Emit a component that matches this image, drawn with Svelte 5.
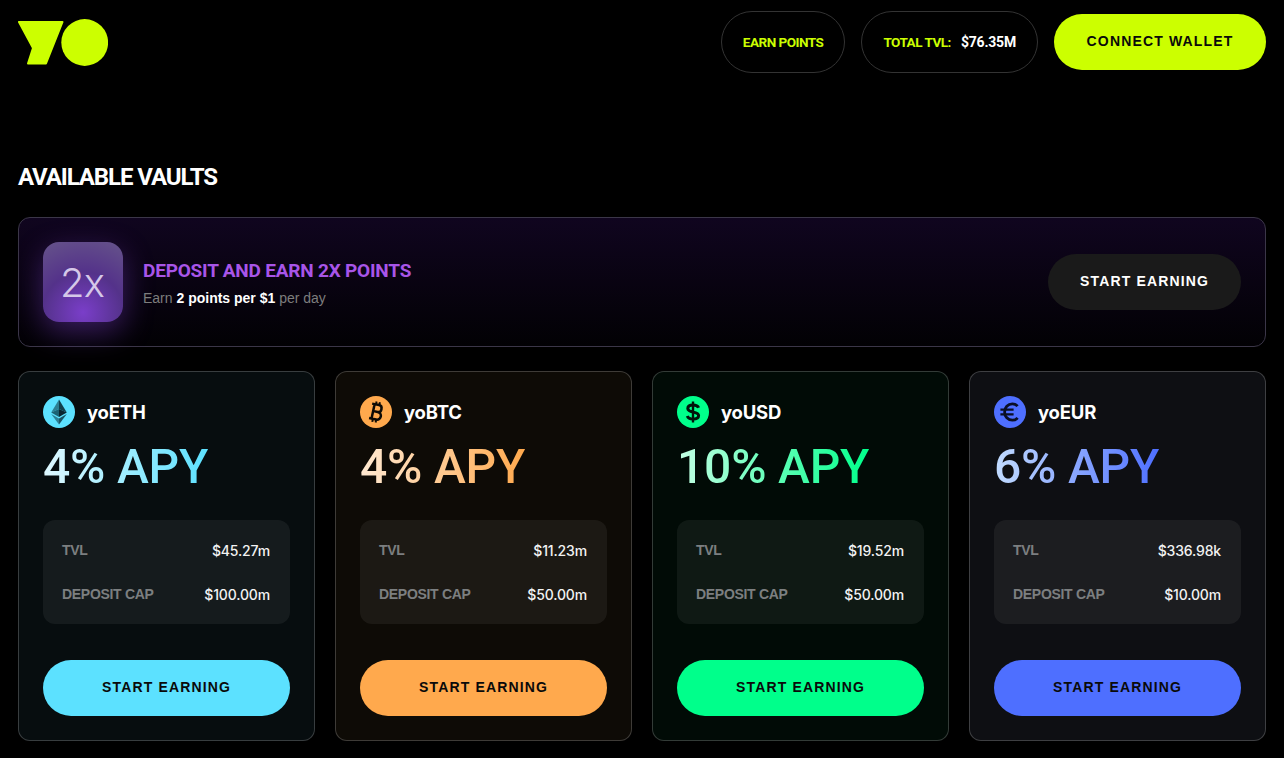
<script>
  const vaults = [
    { name: 'yoETH', apy: '4% APY', tvl: '$45.27m', cap: '$100.00m', accent: '#5ce1ff', light: '#dff8ff', bg: '#070d0f', icon: 'eth' },
    { name: 'yoBTC', apy: '4% APY', tvl: '$11.23m', cap: '$50.00m', accent: '#ffa94d', light: '#ffe9d2', bg: '#0e0b06', icon: 'btc' },
    { name: 'yoUSD', apy: '10% APY', tvl: '$19.52m', cap: '$50.00m', accent: '#00ff8b', light: '#c4ffe4', bg: '#010b06', icon: 'usd' },
    { name: 'yoEUR', apy: '6% APY', tvl: '$336.98k', cap: '$10.00m', accent: '#4e6fff', light: '#c2dcff', bg: '#0e0f13', icon: 'eur' }
  ];
</script>

<div class="page">
  <header class="top">
    <svg class="logo" width="90" height="47" viewBox="0 0 90 47" aria-label="YO">
      <path d="M1 3 H44.5 L28 44.5 H10 L15 29 Z" fill="#ccff00" stroke="#ccff00" stroke-width="2" stroke-linejoin="round" />
      <circle cx="66.7" cy="23.5" r="23.4" fill="#ccff00" />
    </svg>
    <div class="top-actions">
      <div class="pill"><span class="lime">EARN POINTS</span></div>
      <div class="pill"><span class="lime">TOTAL TVL:</span><span class="white">$76.35M</span></div>
      <button class="connect">CONNECT WALLET</button>
    </div>
  </header>

  <h1>AVAILABLE VAULTS</h1>

  <section class="banner">
    <div class="tile">2x</div>
    <div class="banner-text">
      <div class="banner-title">DEPOSIT AND EARN 2X POINTS</div>
      <div class="banner-sub">Earn <b>2 points per $1</b> per day</div>
    </div>
    <button class="banner-btn">START EARNING</button>
  </section>

  <section class="cards">
    {#each vaults as v}
      <article class="card" style="background: {v.bg}">
        <div class="card-head">
          <svg class="coin" width="32" height="32" viewBox="0 0 32 32">
            <circle cx="16" cy="16" r="16" fill={v.accent} />
            {#if v.icon === 'eth'}
              <path d="M16 3.5 L8.2 16.4 L16 12.9 Z" fill="#2d7f93" />
              <path d="M16 3.5 L23.8 16.4 L16 12.9 Z" fill="#123f4c" />
              <path d="M8.2 16.4 L16 12.9 V21 Z" fill="#1c6274" />
              <path d="M23.8 16.4 L16 12.9 V21 Z" fill="#0a2630" />
              <path d="M8.2 18 L16 22.6 V28.5 Z" fill="#2d8095" />
              <path d="M23.8 18 L16 22.6 V28.5 Z" fill="#1a5566" />
            {:else if v.icon === 'btc'}
              <g transform="rotate(12 16 16)" fill="none" stroke="#0e0b06" stroke-width="2.5">
                <path d="M10.5 8.6 H17.6 C21.8 8.6 21.8 15.6 17.6 15.6 H12.5 M17.6 15.6 C23 15.6 23 23.4 17.6 23.4 H10.5 M13 8.6 V23.4" />
                <path d="M14.4 5.6 V8.6 M17.8 5.6 V8.6 M14.4 23.4 V26.4 M17.8 23.4 V26.4" stroke-width="2" />
              </g>
            {:else if v.icon === 'usd'}
              <g fill="none" stroke="#01140b" stroke-width="3">
                <path d="M21.6 11.8 C20.8 9.8 18.8 9 16 9 C12.8 9 10.8 10.4 10.8 12.6 C10.8 17.6 21.6 14.6 21.6 19.6 C21.6 21.8 19.4 23.1 16 23.1 C13 23.1 11 22.1 10.3 20" />
                <path d="M16 5.5 V26.5" stroke-width="2.4" />
              </g>
            {:else}
              <g fill="none" stroke="#0a0f24" stroke-width="2.8">
                <path d="M23.6 10.2 C22.2 8.6 20.3 7.8 18.4 7.8 C13.8 7.8 10.6 11.4 10.6 16 C10.6 20.6 13.8 24.2 18.4 24.2 C20.3 24.2 22.2 23.4 23.6 21.8" />
                <path d="M6.4 13.6 H19.6 M6.4 18.4 H19.6" stroke-width="2.4" />
              </g>
            {/if}
          </svg>
          <span class="vault-name">{v.name}</span>
        </div>
        <div class="apy" style="background-image: linear-gradient(90deg, {v.light}, {v.accent})"><span>{v.apy}</span></div>
        <div class="stats">
          <div class="stat"><span class="stat-label">TVL</span><span class="stat-value">{v.tvl}</span></div>
          <div class="stat"><span class="stat-label">DEPOSIT CAP</span><span class="stat-value">{v.cap}</span></div>
        </div>
        <button class="card-btn" style="background: {v.accent}">START EARNING</button>
      </article>
    {/each}
  </section>
</div>

<style>
  :global(body) {
    margin: 0;
    background: #000;
  }

  .page {
    box-sizing: border-box;
    height: 758px;
    padding: 0 18px;
    background: #000;
    color: #fff;
    font-family: "Liberation Sans", Arial, sans-serif;
    overflow: hidden;
  }

  .top {
    display: flex;
    justify-content: space-between;
    align-items: center;
    height: 84px;
  }

  .logo {
    display: block;
    margin-top: 1px;
  }

  .top-actions {
    display: flex;
    align-items: center;
    gap: 16px;
  }

  .pill {
    box-sizing: border-box;
    display: flex;
    align-items: center;
    justify-content: center;
    gap: 10px;
    height: 62px;
    padding: 0 21px;
    border: 1px solid #333;
    border-radius: 31px;
    font-family: Roboto, sans-serif;
    font-size: 13.5px;
    font-weight: 700;
    letter-spacing: -0.5px;
  }

  .lime {
    color: #ccff00;
  }

  .white {
    color: #fff;
    font-size: 14px;
    letter-spacing: -0.2px;
  }

  button {
    border: 0;
    padding: 0 0 2px;
    font-family: "Liberation Sans", Arial, sans-serif;
    font-weight: 700;
    font-size: 14px;
    letter-spacing: 1.15px;
    cursor: pointer;
  }

  .connect {
    width: 212px;
    height: 56px;
    border-radius: 28px;
    background: #ccff00;
    color: #0a0a0a;
  }

  h1 {
    margin: 78px 0 0;
    height: 55px;
    font-family: Roboto, sans-serif;
    font-size: 24px;
    line-height: 30px;
    font-weight: 700;
    letter-spacing: -1.1px;
  }

  .banner {
    box-sizing: border-box;
    display: flex;
    align-items: center;
    height: 130px;
    padding: 0 24px;
    border: 1px solid #3b3648;
    border-radius: 12px;
    background: linear-gradient(180deg, #10051f 0%, #020104 100%);
  }

  .tile {
    display: flex;
    align-items: center;
    justify-content: center;
    width: 80px;
    height: 80px;
    border-radius: 16px;
    background: radial-gradient(circle at 50% 88%, #7a3ec9 0%, #54328a 50%, #66548a 100%);
    box-shadow: 0 10px 30px rgba(122, 62, 201, 0.45);
    color: #d5c8e8;
    font-family: Inter, sans-serif;
    font-size: 40px;
    font-weight: 300;
    letter-spacing: -1px;
    padding-right: 2px;
    box-sizing: border-box;
  }

  .banner-text {
    flex: 1;
    margin-left: 20px;
    padding-top: 3px;
  }

  .banner-title {
    color: #a855e8;
    font-family: Roboto, sans-serif;
    font-size: 19px;
    line-height: 22px;
    font-weight: 700;
    letter-spacing: -0.2px;
  }

  .banner-sub {
    margin-top: 7px;
    color: #7d7d7d;
    font-size: 14px;
    line-height: 18px;
  }

  .banner-sub b {
    color: #fff;
  }

  .banner-btn {
    width: 193px;
    height: 56px;
    border-radius: 28px;
    background: #1a1a1a;
    color: #fff;
  }

  .cards {
    display: grid;
    grid-template-columns: repeat(4, 1fr);
    gap: 20px;
    margin-top: 24px;
  }

  .card {
    box-sizing: border-box;
    display: flex;
    flex-direction: column;
    height: 370px;
    padding: 24px;
    border: 1px solid rgba(255, 255, 255, 0.2);
    border-radius: 12px;
  }

  .card-head {
    display: flex;
    align-items: center;
    gap: 12px;
    height: 32px;
  }

  .coin {
    display: block;
  }

  .vault-name {
    font-family: Inter, sans-serif;
    font-size: 18.5px;
    font-weight: 700;
    letter-spacing: -0.2px;
  }

  .apy {
    width: fit-content;
    margin-top: 10px;
    font-family: Roboto, sans-serif;
    font-size: 48px;
    line-height: 58px;
    font-weight: 500;
    letter-spacing: -0.2px;
    -webkit-background-clip: text;
    background-clip: text;
    color: transparent;
  }

  .stats {
    display: flex;
    flex-direction: column;
    justify-content: center;
    gap: 24px;
    box-sizing: border-box;
    flex: none;
    height: 104px;
    margin-top: 24px;
    padding: 0 20px 0 19px;
    border-radius: 12px;
    background: rgba(255, 255, 255, 0.06);
  }

  .stat {
    display: flex;
    justify-content: space-between;
    align-items: center;
    height: 20px;
  }

  .stat-label {
    color: #7c7f80;
    font-size: 14px;
    font-weight: 700;
    letter-spacing: -0.3px;
  }

  .stat-value {
    color: #f2f2f2;
    font-family: Inter, sans-serif;
    font-size: 14px;
    font-weight: 500;
    letter-spacing: -0.15px;
  }

  .card-btn {
    flex: none;
    height: 56px;
    margin-top: 36px;
    border-radius: 28px;
    color: #0a0a0a;
  }
</style>
